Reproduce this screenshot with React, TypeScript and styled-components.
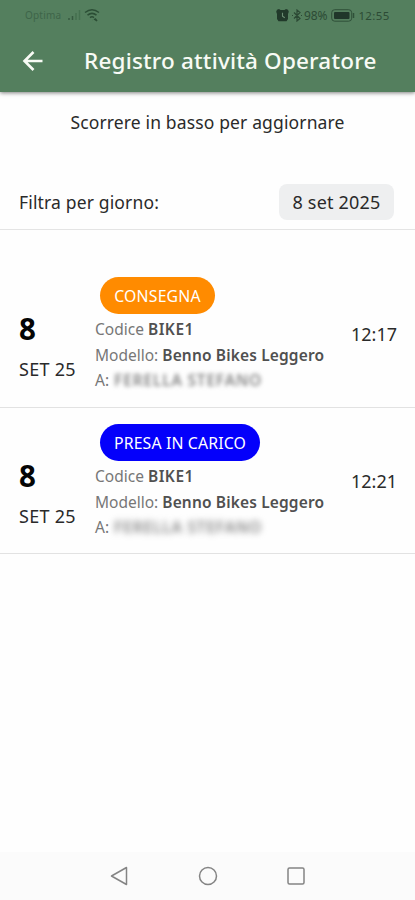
import React from 'react';
import styled, { createGlobalStyle } from 'styled-components';

const GlobalStyle = createGlobalStyle`
  * { box-sizing: border-box; }
  body { margin: 0; background: #fff; }
`;

const Screen = styled.div`
  width: 415px;
  height: 900px;
  display: flex;
  flex-direction: column;
  overflow: hidden;
  background: #fefefe;
  color: #2a2a2a;
  font-family: 'Noto Sans', sans-serif;
`;

const Header = styled.header`
  height: 92px;
  flex: none;
  background: #547f5e;
  box-shadow: 0 1px 4px rgba(0, 0, 0, 0.5);
`;

const StatusBar = styled.div`
  height: 30px;
  padding: 0 22px 0 25px;
  display: flex;
  align-items: center;
  color: #2c4b35;
  svg { flex: none; display: block; }
`;

const Carrier = styled.span`
  width: 43px;
  font-size: 10px;
  color: #3e6549;
  letter-spacing: 0.2px;
`;

const StatusRight = styled.div`
  margin-left: auto;
  display: flex;
  align-items: center;
`;

const StatusText = styled.span<{ $width: number; $size: number; $spacing: number }>`
  width: ${p => p.$width}px;
  font-size: ${p => p.$size}px;
  letter-spacing: ${p => p.$spacing}px;
  white-space: nowrap;
`;

const Toolbar = styled.div`
  height: 62px;
  padding-left: 22px;
  display: flex;
  align-items: center;
  svg { display: block; }
`;

const Title = styled.h1`
  margin: 0 0 0 40px;
  font-size: 22.5px;
  line-height: 30px;
  font-weight: 500;
  letter-spacing: 0.18px;
  color: #f8fbf5;
  white-space: nowrap;
`;

const Hint = styled.div`
  height: 82px;
  padding-top: 18px;
  font-size: 17.5px;
  line-height: 25px;
  text-align: center;
  letter-spacing: 0.14px;
`;

const FilterRow = styled.div`
  height: 56px;
  padding: 0 21px 0 19px;
  display: flex;
  align-items: center;
  justify-content: space-between;
  border-bottom: 1px solid #e4e4e4;
  font-size: 17.5px;
  letter-spacing: 0.15px;
`;

const DateButton = styled.button`
  width: 115px;
  height: 36px;
  padding: 0;
  border: 0;
  border-radius: 8px;
  background: #eeeff0;
  color: #2a2a2a;
  font: 400 18px 'Noto Sans', sans-serif;
  letter-spacing: 0.2px;
`;

const List = styled.main`
  flex: 1;
  padding-top: 30px;
`;

const Entry = styled.article<{ $height: number; $top: number }>`
  height: ${p => p.$height}px;
  padding: ${p => p.$top}px 18px 0 19px;
  display: grid;
  grid-template-columns: 76px 1fr auto;
  border-bottom: 1px solid #e2e2e2;
`;

const DateBlock = styled.div`
  padding-top: 48px;
`;

const Day = styled.div`
  font-size: 29.5px;
  line-height: 40px;
  font-weight: 700;
  color: #050505;
`;

const Month = styled.div`
  margin-top: 7px;
  font-size: 18px;
  line-height: 26px;
  letter-spacing: 0.3px;
  white-space: nowrap;
`;

const Details = styled.div`
  padding-top: 16px;
  color: #777;
`;

const Badge = styled.div<{ $color: string; $width: number; $spacing: number }>`
  width: ${p => p.$width}px;
  height: 37px;
  margin: 0 0 3px 5px;
  border-radius: 19px;
  background: ${p => p.$color};
  color: #fff;
  font-size: 15.8px;
  line-height: 38px;
  letter-spacing: ${p => p.$spacing}px;
  text-align: center;
  white-space: nowrap;
`;

const Line = styled.div`
  font-size: 15.5px;
  line-height: 25.5px;
  white-space: nowrap;
`;

const Strong = styled.b<{ $spacing: number }>`
  font-weight: 600;
  color: #505050;
  letter-spacing: ${p => p.$spacing}px;
`;

const Redacted = styled.span<{ $blur: number }>`
  display: inline-block;
  margin-left: 1px;
  font-weight: 600;
  letter-spacing: 0.8px;
  color: #858585;
  filter: blur(${p => p.$blur}px);
`;

const Time = styled.time`
  padding-top: 60px;
  font-size: 18px;
  line-height: 26px;
`;

const NavBar = styled.nav`
  height: 48px;
  flex: none;
  display: flex;
  justify-content: space-between;
  align-items: center;
  padding: 0 109px;
  background: #fbfbfb;
  svg { display: block; }
`;

const entries = [
  { type: 'CONSEGNA', color: '#ff8b00', width: 115, spacing: 0.2, time: '12:17', height: 148, top: 1, blur: 2 },
  { type: 'PRESA IN CARICO', color: '#0400fb', width: 160, spacing: 0.15, time: '12:21', height: 146, top: 0, blur: 3.2 },
];

export default function App() {
  return (
    <>
      <GlobalStyle />
      <Screen>
        <Header>
          <StatusBar>
            <Carrier>Optima</Carrier>
            <svg width="13" height="12" viewBox="0 0 13 12" fill="none" stroke="#44704f" strokeWidth="1.5">
              <path d="M1 11V9M4.5 11V7" stroke="#365a40" />
              <path d="M8 11V4M11.5 11V1" />
            </svg>
            <svg width="19" height="14" viewBox="-2 0 19 14" fill="none" stroke="#2b4e35" strokeWidth="1.5">
              <path d="M2 4.5Q9 -1 16 4.5M4.5 7.2Q9 3.5 13.5 7.2M7 9.6Q9 8 11 9.6" />
              <path d="M9 12h.1M11 11l3 2-2-2.5" />
            </svg>
            <StatusRight>
              <svg width="13" height="13" viewBox="0 0 13 13">
                <path d="M1 .8 3 0l1.5 1h4L10 0l2 .8.8 2L12 5v5l-1.5 2.2h-8L1 10V5L.2 2.8z" fill="#21392a" />
                <path d="M6.5 3.7v3.5l2.3 1.6" fill="none" stroke="#6b8d73" strokeWidth="1.1" />
              </svg>
              <svg width="15" height="13" viewBox="0 0 15 13" fill="none" stroke="#2b4934" strokeWidth="1.2">
                <path d="m5 3.5 6 6L8 12V1l3 2.5-6 6M3 6.5h1M12 6.5h1" />
              </svg>
              <StatusText $width={27} $size={12} $spacing={-0.1}>98%</StatusText>
              <svg width="24" height="13" viewBox="0 0 24 13">
                <rect x=".7" y=".7" width="20" height="11.5" rx="3" fill="none" stroke="#2f5039" />
                <rect x="3" y="3" width="15.5" height="7" rx="1" fill="#20372a" />
                <path d="M22.5 4v5" stroke="#2f5039" strokeWidth="1.5" />
              </svg>
              <StatusText $width={38} $size={11.5} $spacing={0.4}>&nbsp;12:55</StatusText>
            </StatusRight>
          </StatusBar>
          <Toolbar>
            <svg width="22" height="22" viewBox="0 0 22 22" fill="none" stroke="#f8fbf5" strokeWidth="2.6">
              <path d="M20.5 11H2.8M11.5 2 2.5 11l9 9" />
            </svg>
            <Title>Registro attività Operatore</Title>
          </Toolbar>
        </Header>
        <Hint>Scorrere in basso per aggiornare</Hint>
        <FilterRow>
          <span>Filtra per giorno:</span>
          <DateButton>8 set 2025</DateButton>
        </FilterRow>
        <List>
          {entries.map(e => (
            <Entry key={e.time} $height={e.height} $top={e.top}>
              <DateBlock>
                <Day>8</Day>
                <Month>SET 25</Month>
              </DateBlock>
              <Details>
                <Badge $color={e.color} $width={e.width} $spacing={e.spacing}>{e.type}</Badge>
                <Line>Codice <Strong $spacing={0.5}>BIKE1</Strong></Line>
                <Line>Modello: <Strong $spacing={0.15}>Benno Bikes Leggero</Strong></Line>
                <Line>A: <Redacted $blur={e.blur}>FERELLA STEFANO</Redacted></Line>
              </Details>
              <Time>{e.time}</Time>
            </Entry>
          ))}
        </List>
        <NavBar>
          <svg width="20" height="20" viewBox="0 0 20 20" fill="none" stroke="#848484" strokeWidth="1.5" strokeLinejoin="round">
            <path d="M2.5 10 17.5 1.5v17z" />
          </svg>
          <svg width="20" height="20" viewBox="0 0 20 20" fill="none" stroke="#848484" strokeWidth="1.5">
            <circle cx="10" cy="10" r="8.5" />
          </svg>
          <svg width="20" height="20" viewBox="0 0 20 20" fill="none" stroke="#848484" strokeWidth="1.5">
            <rect x="2" y="2" width="16" height="16" rx="1.5" />
          </svg>
        </NavBar>
      </Screen>
    </>
  );
}
